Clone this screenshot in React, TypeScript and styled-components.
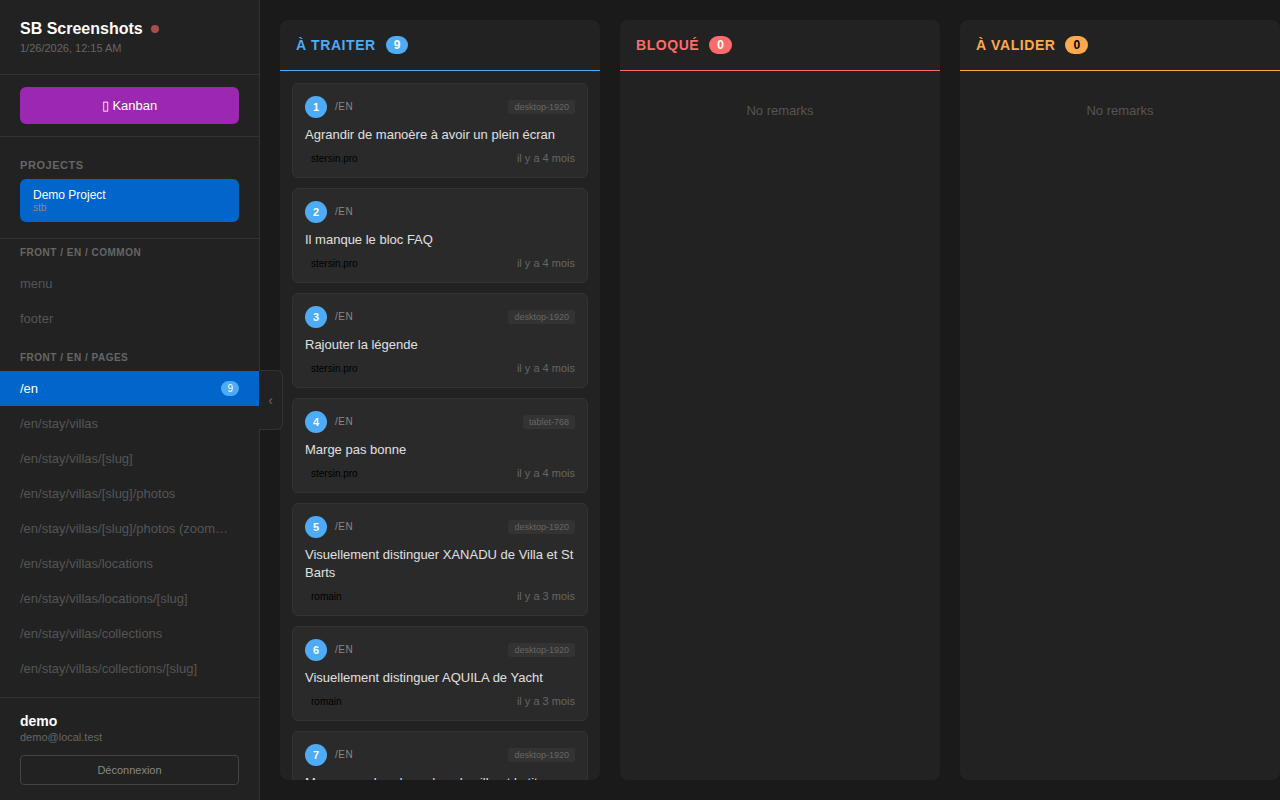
import React from "react";
import styled, { createGlobalStyle } from "styled-components";

const GlobalStyle = createGlobalStyle`
  * { box-sizing: border-box; margin: 0; padding: 0; }
  body {
    background: #1a1a1a;
    color: #e0e0e0;
    font-family: "Liberation Sans", Arial, sans-serif;
    overflow: hidden;
  }
  button { font-family: inherit; cursor: pointer; }
`;

const Layout = styled.div`
  display: flex;
  height: 100vh;
`;

const Sidebar = styled.aside`
  position: relative;
  display: flex;
  flex-direction: column;
  flex: none;
  width: 260px;
  background: #222;
  border-right: 1px solid #333;
`;

const SidebarHeader = styled.header`
  padding: 20px;
  border-bottom: 1px solid #333;
`;

const Brand = styled.h1`
  display: flex;
  align-items: center;
  gap: 8px;
  margin-bottom: 4px;
  font-size: 16px;
  line-height: 18px;
  color: #fff;
`;

const StatusDot = styled.span`
  width: 8px;
  height: 8px;
  border-radius: 50%;
  background: #ff6b6b;
  opacity: 0.6;
`;

const Timestamp = styled.p`
  font-size: 11px;
  line-height: 12px;
  color: #666;
`;

const ViewSwitch = styled.div`
  padding: 12px 20px;
  border-bottom: 1px solid #333;
`;

const KanbanButton = styled.button`
  display: block;
  width: 100%;
  padding: 11px;
  border: 0;
  border-radius: 6px;
  background: #9c27b0;
  color: #fff;
  font-size: 13px;
  line-height: 15px;
`;

const Projects = styled.section`
  padding: 22px 20px 16px;
  border-bottom: 1px solid #333;
`;

const SectionTitle = styled.h2`
  margin-bottom: 8px;
  font-size: 11px;
  line-height: 12px;
  letter-spacing: 0.05em;
  text-transform: uppercase;
  color: #666;
`;

const ProjectButton = styled.button`
  display: block;
  width: 100%;
  padding: 9px 13px;
  border: 0;
  border-radius: 6px;
  background: #0066cc;
  color: #fff;
  text-align: left;
  font-size: 12px;
  line-height: 14px;
`;

const ProjectCode = styled.span`
  display: block;
  font-size: 10px;
  line-height: 11px;
  color: #888;
`;

const Nav = styled.nav`
  flex: 1;
  min-height: 0;
  overflow-y: auto;
  scrollbar-width: none;
`;

const NavGroup = styled.section`
  margin-bottom: 8px;
`;

const NavTitle = styled.h3`
  padding: 8px 20px;
  font-size: 10px;
  line-height: 11px;
  letter-spacing: 0.05em;
  text-transform: uppercase;
  color: #666;
`;

const NavLink = styled.a<{ $active?: boolean }>`
  display: flex;
  align-items: center;
  justify-content: space-between;
  padding: 10px 20px;
  font-size: 13px;
  line-height: 15px;
  text-decoration: none;
  background: ${(p) => (p.$active ? "#0066cc" : "transparent")};
  color: ${(p) => (p.$active ? "#fff" : "#555")};
`;

const NavLabel = styled.span`
  flex: 1;
  margin-right: 8px;
  overflow: hidden;
  text-overflow: ellipsis;
  white-space: nowrap;
`;

const NavCount = styled.span`
  padding: 2px 6px;
  border-radius: 10px;
  background: #4dabf7;
  color: #fff;
  font-size: 10px;
  line-height: 11px;
`;

const UserPanel = styled.footer`
  padding: 15px 20px;
  border-top: 1px solid #333;
`;

const UserName = styled.p`
  font-size: 14px;
  font-weight: bold;
  line-height: 16px;
  margin-bottom: 2px;
  color: #fff;
`;

const UserEmail = styled.p`
  margin-bottom: 12px;
  font-size: 11px;
  line-height: 12px;
  color: #666;
`;

const LogoutButton = styled.button`
  display: block;
  width: 100%;
  padding: 8px;
  border: 1px solid #444;
  border-radius: 4px;
  background: transparent;
  color: #888;
  font-size: 11px;
  line-height: 12px;
`;

const CollapseButton = styled.button`
  position: absolute;
  top: 50%;
  left: 100%;
  z-index: 2;
  width: 24px;
  height: 60px;
  transform: translateY(-50%);
  border: 1px solid #333;
  border-left: 0;
  border-radius: 0 6px 6px 0;
  background: #222;
  color: #666;
  font-size: 14px;
`;

const Board = styled.main`
  display: flex;
  flex: 1;
  gap: 20px;
  min-width: 0;
  padding: 20px;
  overflow-x: auto;
  scrollbar-width: none;
`;

const Column = styled.section`
  display: flex;
  flex-direction: column;
  flex: 0 0 320px;
  min-height: 0;
  overflow: hidden;
  border-radius: 8px;
  background: #222;
`;

const ColumnHeader = styled.header<{ $accent: string }>`
  display: flex;
  align-items: center;
  gap: 10px;
  padding: 16px;
  border-bottom: 1px solid ${(p) => p.$accent};
  color: ${(p) => p.$accent};
`;

const ColumnTitle = styled.h2`
  font-size: 14px;
  line-height: 18px;
  letter-spacing: 0.04em;
  text-transform: uppercase;
`;

const ColumnCount = styled.span<{ $accent: string; $ink: string }>`
  padding: 2px 8px;
  border-radius: 10px;
  background: ${(p) => p.$accent};
  color: ${(p) => p.$ink};
  font-size: 12px;
  font-weight: bold;
  line-height: 14px;
`;

const ColumnBody = styled.div`
  display: flex;
  flex-direction: column;
  flex: 1;
  gap: 10px;
  min-height: 0;
  padding: 12px;
  overflow-y: auto;
  scrollbar-width: none;
`;

const EmptyNote = styled.p`
  padding: 20px;
  font-size: 13px;
  line-height: 15px;
  text-align: center;
  color: #555;
`;

const Card = styled.article`
  flex: none;
  padding: 12px;
  border: 1px solid #333;
  border-radius: 6px;
  background: #2a2a2a;
`;

const CardTop = styled.div`
  display: flex;
  align-items: center;
  gap: 8px;
  margin-bottom: 8px;
`;

const CardNumber = styled.span`
  width: 22px;
  border-radius: 50%;
  background: #4dabf7;
  color: #fff;
  font-size: 11px;
  font-weight: bold;
  line-height: 22px;
  text-align: center;
`;

const CardPage = styled.span`
  flex: 1;
  font-size: 10px;
  line-height: 12px;
  letter-spacing: 0.05em;
  text-transform: uppercase;
  color: #888;
`;

const DeviceTag = styled.span`
  padding: 2px 6px;
  border-radius: 3px;
  background: #333;
  color: #666;
  font-size: 9px;
  line-height: 10px;
`;

const CardText = styled.p`
  margin-bottom: 8px;
  font-size: 13px;
  line-height: 18px;
  color: #e0e0e0;
`;

const CardBottom = styled.div`
  display: flex;
  align-items: center;
  justify-content: space-between;
  line-height: 13px;
`;

const Author = styled.span`
  padding: 0 6px;
  font-size: 10px;
  line-height: 12px;
  color: #000;
`;

const Age = styled.time`
  font-size: 11px;
  color: #666;
`;

type Remark = { text: string; author: string; age: string; device?: string };

const remarks: Remark[] = [
  { text: "Agrandir de manoère à avoir un plein écran", author: "stersin.pro", age: "il y a 4 mois", device: "desktop-1920" },
  { text: "Il manque le bloc FAQ", author: "stersin.pro", age: "il y a 4 mois" },
  { text: "Rajouter la légende", author: "stersin.pro", age: "il y a 4 mois", device: "desktop-1920" },
  { text: "Marge pas bonne", author: "stersin.pro", age: "il y a 4 mois", device: "tablet-768" },
  { text: "Visuellement distinguer XANADU de Villa et St Barts", author: "romain", age: "il y a 3 mois", device: "desktop-1920" },
  { text: "Visuellement distinguer AQUILA de Yacht", author: "romain", age: "il y a 3 mois", device: "desktop-1920" },
  { text: "Manque un bandeau dans la villa et le titre", author: "romain", age: "il y a 3 mois", device: "desktop-1920" },
];

const columns: { title: string; accent: string; ink: string; count: number; items: Remark[] }[] = [
  { title: "À traiter", accent: "#4dabf7", ink: "#fff", count: 9, items: remarks },
  { title: "Bloqué", accent: "#ff6b6b", ink: "#fff", count: 0, items: [] },
  { title: "À valider", accent: "#ffa94d", ink: "#000", count: 0, items: [] },
];

const groups: { title: string; pages: { path: string; count?: number }[] }[] = [
  { title: "Front / en / common", pages: [{ path: "menu" }, { path: "footer" }] },
  {
    title: "Front / en / pages",
    pages: [
      { path: "/en", count: 9 },
      { path: "/en/stay/villas" },
      { path: "/en/stay/villas/[slug]" },
      { path: "/en/stay/villas/[slug]/photos" },
      { path: "/en/stay/villas/[slug]/photos (zoomed)" },
      { path: "/en/stay/villas/locations" },
      { path: "/en/stay/villas/locations/[slug]" },
      { path: "/en/stay/villas/collections" },
      { path: "/en/stay/villas/collections/[slug]" },
    ],
  },
];

function RemarkCard({ remark, number }: { remark: Remark; number: number }) {
  return (
    <Card>
      <CardTop>
        <CardNumber>{number}</CardNumber>
        <CardPage>/en</CardPage>
        {remark.device && <DeviceTag>{remark.device}</DeviceTag>}
      </CardTop>
      <CardText>{remark.text}</CardText>
      <CardBottom>
        <Author>{remark.author}</Author>
        <Age>{remark.age}</Age>
      </CardBottom>
    </Card>
  );
}

export default function App() {
  return (
    <>
      <GlobalStyle />
      <Layout>
        <Sidebar>
          <SidebarHeader>
            <Brand>
              SB Screenshots <StatusDot />
            </Brand>
            <Timestamp>1/26/2026, 12:15 AM</Timestamp>
          </SidebarHeader>
          <ViewSwitch>
            <KanbanButton type="button">▯ Kanban</KanbanButton>
          </ViewSwitch>
          <Projects>
            <SectionTitle>Projects</SectionTitle>
            <ProjectButton type="button">
              Demo Project
              <ProjectCode>stb</ProjectCode>
            </ProjectButton>
          </Projects>
          <Nav aria-label="Pages">
            {groups.map((group) => (
              <NavGroup key={group.title}>
                <NavTitle>{group.title}</NavTitle>
                {group.pages.map((page) => (
                  <NavLink key={page.path} href="#" $active={page.path === "/en"}>
                    <NavLabel>{page.path}</NavLabel>
                    {page.count && <NavCount>{page.count}</NavCount>}
                  </NavLink>
                ))}
              </NavGroup>
            ))}
          </Nav>
          <UserPanel>
            <UserName>demo</UserName>
            <UserEmail>demo@local.test</UserEmail>
            <LogoutButton type="button">Déconnexion</LogoutButton>
          </UserPanel>
          <CollapseButton type="button" aria-label="Toggle sidebar">‹</CollapseButton>
        </Sidebar>
        <Board>
          {columns.map((column) => (
            <Column key={column.title}>
              <ColumnHeader $accent={column.accent}>
                <ColumnTitle>{column.title}</ColumnTitle>
                <ColumnCount $accent={column.accent} $ink={column.ink}>
                  {column.count}
                </ColumnCount>
              </ColumnHeader>
              <ColumnBody>
                {column.items.length === 0 && <EmptyNote>No remarks</EmptyNote>}
                {column.items.map((remark, index) => (
                  <RemarkCard key={remark.text} remark={remark} number={index + 1} />
                ))}
              </ColumnBody>
            </Column>
          ))}
        </Board>
      </Layout>
    </>
  );
}
